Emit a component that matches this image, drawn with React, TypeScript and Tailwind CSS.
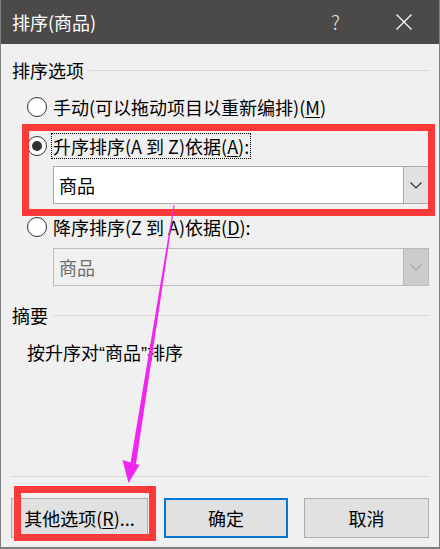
function Radio({ checked }: { checked?: boolean }) {
  return (
    <span className="flex h-[20px] w-[20px] shrink-0 items-center justify-center rounded-full border border-[#333333] bg-white">
      {checked && <span className="h-[10px] w-[10px] rounded-full bg-[#333333]" />}
    </span>
  )
}

function Chevron({ color }: { color: string }) {
  return (
    <svg width="12" height="7" viewBox="0 0 12 7" fill="none">
      <polyline points="0.5,0.5 6,6 11.5,0.5" stroke={color} strokeWidth="1.2" />
    </svg>
  )
}

function Combo({ disabled }: { disabled?: boolean }) {
  return (
    <div
      className={
        disabled
          ? "ml-[52px] flex h-[38px] w-[376px] border border-[#bcbcbc] bg-[#f0f0f0]"
          : "ml-[52px] flex h-[38px] w-[376px] border border-[#a9a9a9] bg-white"
      }
    >
      <div className={disabled ? "flex flex-1 items-center pl-[5px] text-[#6d6d6d]" : "flex flex-1 items-center pl-[5px]"}>
        商品
      </div>
      <div
        className={
          disabled
            ? "flex w-[25px] items-center justify-center border-l border-[#bcbcbc] bg-[#cccccc]"
            : "flex w-[25px] items-center justify-center border-l border-[#a9a9a9] bg-[#e1e1e1]"
        }
      >
        <Chevron color={disabled ? "#a8a8a8" : "#333333"} />
      </div>
    </div>
  )
}

export default function App() {
  return (
    <div className="relative h-[549px] w-[440px] overflow-hidden border-x border-b-2 border-[#7e7e7e] bg-[#f0f0f0] font-['Noto_Sans_CJK_SC',sans-serif] text-[18px] leading-[24px] text-black">
      <div className="flex h-[44px] items-center bg-[#4b4a48] pl-[11px] text-white">
        <span className="flex-1">排序(商品)</span>
        <span className="mr-[56px] text-[20px] font-light text-[#e8e8e8]">?</span>
        <svg width="16" height="16" viewBox="0 0 16 16" className="mr-[27px]">
          <path d="M0.5 0.5 L15.5 15.5 M15.5 0.5 L0.5 15.5" stroke="#ffffff" strokeWidth="1.2" />
        </svg>
      </div>

      <div className="mt-[14px] flex items-center pl-[11px]">
        <span>排序选项</span>
        <div className="ml-[5px] mr-[10px] h-px flex-1 bg-[#d7d7d7]" />
      </div>

      <div className="mt-[13px] flex items-center gap-[6px] pl-[26px]">
        <Radio />
        <span>
          手动(可以拖动项目以重新编排)(<span className="underline underline-offset-2">M</span>)
        </span>
      </div>

      <div className="mt-[14px] flex items-center gap-[4px] pl-[26px]">
        <Radio checked />
        <span className="border border-dotted border-black px-[1px]">
          升序排序(A 到 Z)依据(<span className="underline underline-offset-2">A</span>):
        </span>
      </div>

      <div className="mt-[7px]">
        <Combo />
      </div>

      <div className="mt-[11px] flex items-center gap-[6px] pl-[26px]">
        <Radio />
        <span>
          降序排序(Z 到 A)依据(<span className="underline underline-offset-2">D</span>):
        </span>
      </div>

      <div className="mt-[9px]">
        <Combo disabled />
      </div>

      <div className="mt-[17px] flex items-center pl-[11px]">
        <span>摘要</span>
        <div className="ml-[5px] mr-[10px] h-px flex-1 bg-[#d7d7d7]" />
      </div>

      <div className="mt-[13px] pl-[26px]">
        按升序对<span className="font-['Liberation_Sans',sans-serif]">“</span>商品
        <span className="font-['Liberation_Sans',sans-serif]">”</span>排序
      </div>

      <div className="mx-[10px] mt-[110px] h-px bg-[#d7d7d7]" />

      <div className="mt-[21px] flex pl-[10px]">
        <button className="h-[40px] w-[137px] border border-[#adadad] bg-[#e1e1e1]">
          其他选项(<span className="underline underline-offset-2">R</span>)...
        </button>
        <button className="ml-[16px] h-[40px] w-[124px] border-2 border-[#0078d7] bg-[#e1e1e1]">确定</button>
        <button className="ml-[16px] h-[40px] w-[125px] border border-[#adadad] bg-[#e1e1e1]">取消</button>
      </div>

      {/* annotation overlays */}
      <div className="absolute left-[21px] top-[124px] h-[92px] w-[413px] border-[7px] border-[#fd3a3a]" />
      <div className="absolute left-[13px] top-[486px] h-[55px] w-[142px] border-[7px] border-[#fd3a3a]" />
      <svg className="absolute left-0 top-0" width="440" height="549" viewBox="0 0 440 549">
        <polygon points="172.6,205 173.6,205 135,464 129.5,463" fill="#f026f0" />
        <polygon points="121.5,460 138.5,465 127.5,483" fill="#f026f0" />
      </svg>
    </div>
  )
}
